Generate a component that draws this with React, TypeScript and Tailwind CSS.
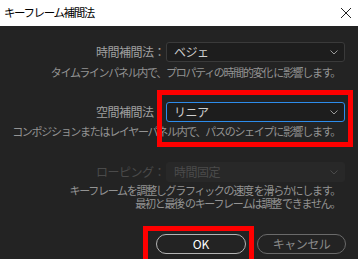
const jp = { fontFamily: '"Meiryo UI", "Noto Sans CJK JP", "Noto Sans", sans-serif' };

function Chevron({ color }: { color: string }) {
  return (
    <svg width="8" height="5" viewBox="0 0 8 5" className="shrink-0">
      <path d="M0.5 0.5 L4 4 L7.5 0.5" fill="none" stroke={color} strokeWidth="1" />
    </svg>
  );
}

function Select({ value, variant }: { value: string; variant: "normal" | "focus" | "disabled" }) {
  const box =
    variant === "focus"
      ? "bg-[#1d1d1d] border border-[#2d8ceb] text-[#cfcfcf]"
      : variant === "disabled"
      ? "bg-[#282828] border border-[#282828] text-[#4b4b4b]"
      : "bg-[#1d1d1d] border border-[#3a3a3a] text-[#cfcfcf]";
  return (
    <div className={`w-[179px] h-[20px] rounded-[3px] flex items-center justify-between pl-[7px] pr-[6px] ${box}`}>
      <span className="text-[12px] leading-none tracking-[-0.5px]">{value}</span>
      <Chevron color={variant === "disabled" ? "#4a4a4a" : "#9a9a9a"} />
    </div>
  );
}

const desc = "text-right pr-[18px] text-[11px] tracking-[-1.3px] text-[#939393] whitespace-nowrap";

export default function App() {
  return (
    <div style={jp} className="relative w-[358px] h-[259px] overflow-hidden bg-[#232323]">
      {/* title bar */}
      <div className="h-[26px] bg-white flex items-center justify-between pl-[4px] pr-[6px]">
        <span className="text-[11.5px] text-black tracking-[-1.4px]">キーフレーム補間法</span>
        <svg width="12" height="12" viewBox="0 0 12 12">
          <path d="M1 1 L11 11 M11 1 L1 11" stroke="#222" strokeWidth="1" />
        </svg>
      </div>

      <div className="flex items-center justify-end gap-[1px] pr-[13px] mt-[16px]">
        <span className="text-[12px] text-[#a0a0a0] tracking-[-0.5px]">時間補間法：</span>
        <Select value="ベジェ" variant="normal" />
      </div>
      <p className={`mt-[3px] leading-[14px] ${desc}`}>
        タイムラインパネル内で、プロパティの時間的変化 に影響します。
      </p>

      <div className="flex items-center justify-end gap-[1px] pr-[13px] mt-[23px]">
        <span className="text-[12px] text-[#a0a0a0] tracking-[-0.5px]">空間補間法：</span>
        <Select value="リニア" variant="focus" />
      </div>
      <p className={`mt-[2px] leading-[14px] ${desc}`}>
        コンポジションまたはレイヤーパネル内で、パスのシェイプに影響します。
      </p>

      <div className="flex items-center justify-end gap-[1px] pr-[13px] mt-[24px]">
        <span className="text-[12px] text-[#4a4a4a] tracking-[-0.5px]">ローピング：</span>
        <Select value="時間固定" variant="disabled" />
      </div>
      <div className="mt-[2px] flex flex-col">
        <p className={`leading-[13px] ${desc}`}>キーフレームを調整しグラフィックの速度 を滑らかにします。</p>
        <p className={`leading-[13px] ${desc}`}>最初と最後 のキーフレームは調整 できません。</p>
      </div>

      <div className="flex justify-end gap-[11px] pr-[12px] mt-[24px]">
        <button className="w-[90px] h-[20px] rounded-full border border-[#b4b4b4] text-[12px] leading-none text-white">
          OK
        </button>
        <button className="w-[89px] h-[20px] rounded-full border border-[#6a6a6a] text-[12px] leading-none text-[#8a8a8a] tracking-[-0.5px]">
          キャンセル
        </button>
      </div>

      {/* red annotation boxes */}
      <div className="absolute left-[157px] top-[90px] w-[196px] h-[57px] border-[5px] border-[#ff0000]" />
      <div className="absolute left-[143px] top-[226px] w-[111px] h-[40px] border-[5px] border-[#ff0000]" />
    </div>
  );
}
